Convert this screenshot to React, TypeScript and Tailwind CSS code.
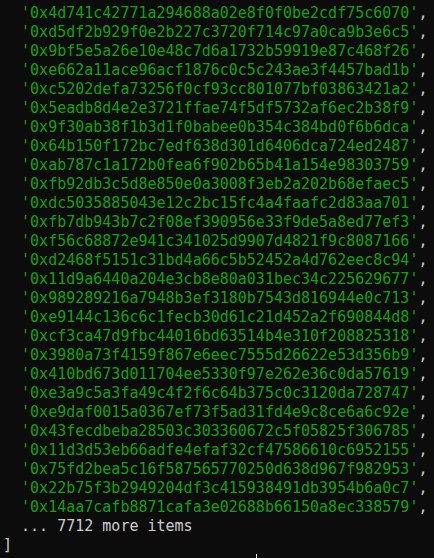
const hashes = [
  '0x4d741c42771a294688a02e8f0f0be2cdf75c6070',
  '0xd5df2b929f0e2b227c3720f714c97a0ca9b3e6c5',
  '0x9bf5e5a26e10e48c7d6a1732b59919e87c468f26',
  '0xe662a11ace96acf1876c0c5c243ae3f4457bad1b',
  '0xc5202defa73256f0cf93cc801077bf03863421a2',
  '0x5eadb8d4e2e3721ffae74f5df5732af6ec2b38f9',
  '0x9f30ab38f1b3d1f0babee0b354c384bd0f6b6dca',
  '0x64b150f172bc7edf638d301d6406dca724ed2487',
  '0xab787c1a172b0fea6f902b65b41a154e98303759',
  '0xfb92db3c5d8e850e0a3008f3eb2a202b68efaec5',
  '0xdc5035885043e12c2bc15fc4a4faafc2d83aa701',
  '0xfb7db943b7c2f08ef390956e33f9de5a8ed77ef3',
  '0xf56c68872e941c341025d9907d4821f9c8087166',
  '0xd2468f5151c31bd4a66c5b52452a4d762eec8c94',
  '0x11d9a6440a204e3cb8e80a031bec34c225629677',
  '0x989289216a7948b3ef3180b7543d816944e0c713',
  '0xe9144c136c6c1fecb30d61c21d452a2f690844d8',
  '0xcf3ca47d9fbc44016bd63514b4e310f208825318',
  '0x3980a73f4159f867e6eec7555d26622e53d356b9',
  '0x410bd673d011704ee5330f97e262e36c0da57619',
  '0xe3a9c5a3fa49c4f2f6c64b375c0c3120da728747',
  '0xe9daf0015a0367ef73f5ad31fd4e9c8ce6a6c92e',
  '0x43fecdbeba28503c303360672c5f05825f306785',
  '0x11d3d53eb66adfe4efaf32cf47586610c6952155',
  '0x75fd2bea5c16f587565770250d638d967f982953',
  '0x22b75f3b2949204df3c415938491db3954b6a0c7',
  '0x14aa7cafb8871cafa3e02688b66150a8ec338579',
]

export default function App() {
  return (
    <div className="h-[558px] w-[434px] overflow-hidden bg-[#0c0c0c] pl-[3px] pt-[4px] font-['DejaVu_Sans_Mono',monospace] text-[15px] leading-[19px] text-[#cccccc]">
      {hashes.map((h) => (
        <div key={h} className="whitespace-pre">
          {'  '}
          <span className="text-[#13a10e]">'{h}'</span>,
        </div>
      ))}
      <div className="whitespace-pre">{'  ... 7712 more items'}</div>
      <div className="whitespace-pre">]</div>
      {/* next prompt line, mostly below the fold */}
      <div className="relative h-[19px]">
        <span className="absolute left-[253px] -top-px h-[19px] w-px bg-white" />
      </div>
    </div>
  )
}
